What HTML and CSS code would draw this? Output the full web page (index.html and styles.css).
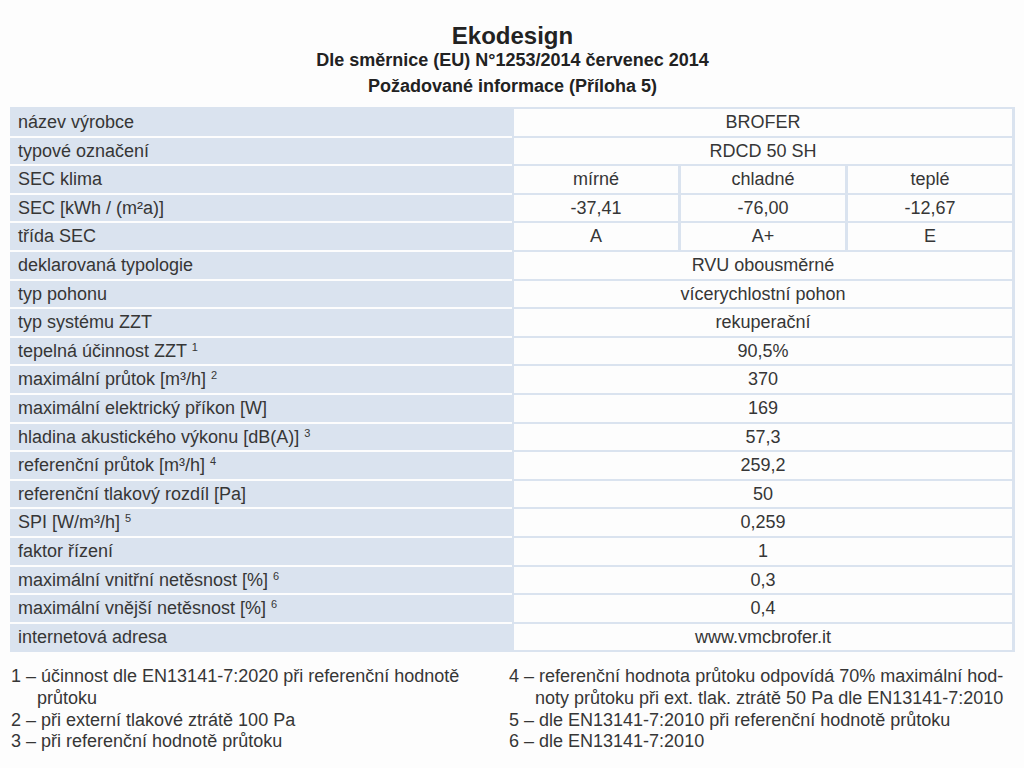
FILE: index.html
```html
<!DOCTYPE html>
<html lang="cs">
<head>
<meta charset="utf-8">
<title>Ekodesign</title>
<link rel="stylesheet" href="styles.css">
</head>
<body>
<div class="page">
  <header class="head">
    <h1 class="title">Ekodesign</h1>
    <p class="sub">Dle směrnice (EU) N°1253/2014 červenec 2014</p>
    <p class="sub">Požadované informace (Příloha 5)</p>
  </header>

  <div class="sheet">
    <div class="row"><div class="lab">název výrobce</div><div class="vals"><div class="v">BROFER</div></div></div>
    <div class="row"><div class="lab">typové označení</div><div class="vals"><div class="v">RDCD 50 SH</div></div></div>
    <div class="row"><div class="lab">SEC klima</div><div class="vals"><div class="v">mírné</div><div class="v">chladné</div><div class="v">teplé</div></div></div>
    <div class="row"><div class="lab">SEC [kWh / (m²a)]</div><div class="vals"><div class="v">-37,41</div><div class="v">-76,00</div><div class="v">-12,67</div></div></div>
    <div class="row"><div class="lab">třída SEC</div><div class="vals"><div class="v">A</div><div class="v">A+</div><div class="v">E</div></div></div>
    <div class="row"><div class="lab">deklarovaná typologie</div><div class="vals"><div class="v">RVU obousměrné</div></div></div>
    <div class="row"><div class="lab">typ pohonu</div><div class="vals"><div class="v">vícerychlostní pohon</div></div></div>
    <div class="row"><div class="lab">typ systému ZZT</div><div class="vals"><div class="v">rekuperační</div></div></div>
    <div class="row"><div class="lab">tepelná účinnost ZZT <sup class="fn">1</sup></div><div class="vals"><div class="v">90,5%</div></div></div>
    <div class="row"><div class="lab">maximální průtok [m³/h] <sup class="fn">2</sup></div><div class="vals"><div class="v">370</div></div></div>
    <div class="row"><div class="lab">maximální elektrický příkon [W]</div><div class="vals"><div class="v">169</div></div></div>
    <div class="row"><div class="lab">hladina akustického výkonu [dB(A)] <sup class="fn">3</sup></div><div class="vals"><div class="v">57,3</div></div></div>
    <div class="row"><div class="lab">referenční průtok [m³/h] <sup class="fn">4</sup></div><div class="vals"><div class="v">259,2</div></div></div>
    <div class="row"><div class="lab">referenční tlakový rozdíl [Pa]</div><div class="vals"><div class="v">50</div></div></div>
    <div class="row"><div class="lab">SPI [W/m³/h] <sup class="fn">5</sup></div><div class="vals"><div class="v">0,259</div></div></div>
    <div class="row"><div class="lab">faktor řízení</div><div class="vals"><div class="v">1</div></div></div>
    <div class="row"><div class="lab">maximální vnitřní netěsnost [%] <sup class="fn">6</sup></div><div class="vals"><div class="v">0,3</div></div></div>
    <div class="row"><div class="lab">maximální vnější netěsnost [%] <sup class="fn">6</sup></div><div class="vals"><div class="v">0,4</div></div></div>
    <div class="row"><div class="lab">internetová adresa</div><div class="vals"><div class="v">www.vmcbrofer.it</div></div></div>
  </div>

  <div class="notes">
    <ul class="col">
      <li>1 – účinnost dle EN13141-7:2020 při referenční hodnotě průtoku</li>
      <li>2 – při externí tlakové ztrátě 100 Pa</li>
      <li>3 – při referenční hodnotě průtoku</li>
    </ul>
    <ul class="col">
      <li>4 – referenční hodnota průtoku odpovídá 70% maximální hod-<br>noty průtoku při ext. tlak. ztrátě 50 Pa dle EN13141-7:2010</li>
      <li>5 – dle EN13141-7:2010 při referenční hodnotě průtoku</li>
      <li>6 – dle EN13141-7:2010</li>
    </ul>
  </div>
</div>
</body>
</html>
```

FILE: styles.css
```css
* { box-sizing: border-box; }

html, body {
  margin: 0;
  padding: 0;
  background: #fdfdfd;
}

body {
  font-family: "Liberation Sans", Arial, sans-serif;
  color: #363636;
}

.page {
  width: 1024px;
  padding: 23px 9px 0 10px;
}

.head {
  text-align: center;
  color: #222;
  margin-bottom: 8px;
}

.title {
  margin: 0;
  font-size: 24px;
  line-height: 25px;
  font-weight: bold;
}

.sub {
  margin: 0;
  font-size: 18px;
  line-height: 25.5px;
  font-weight: bold;
}

.sheet {
  background: #dae3ef;
  padding: 2px 3px 0 0;
}

.row {
  display: flex;
  height: 28.6px;
  font-size: 18px;
}

.lab {
  width: 502px;
  flex: none;
  padding-left: 8px;
  border-bottom: 2px solid #fdfdfd;
  line-height: 27px;
  white-space: nowrap;
}

.row:last-child .lab {
  border-bottom-color: transparent;
}

.vals {
  flex: 1;
  display: flex;
  gap: 3px;
  margin-left: 2px;
  margin-bottom: 2px;
}

.v {
  flex: 1;
  background: #fdfdfd;
  text-align: center;
  line-height: 27px;
}

.fn {
  font-size: 11px;
  vertical-align: 6px;
  line-height: 0;
}

.notes {
  display: flex;
  margin-top: 14px;
  font-size: 18px;
  line-height: 21.7px;
}

.col {
  list-style: none;
  margin: 0;
  padding: 0;
  width: 499px;
}

.col + .col {
  width: auto;
  flex: 1;
}

.col li {
  padding-left: 26px;
  text-indent: -26px;
}

.notes .col:first-child {
  padding-left: 1px;
  padding-right: 40px;
}
```
